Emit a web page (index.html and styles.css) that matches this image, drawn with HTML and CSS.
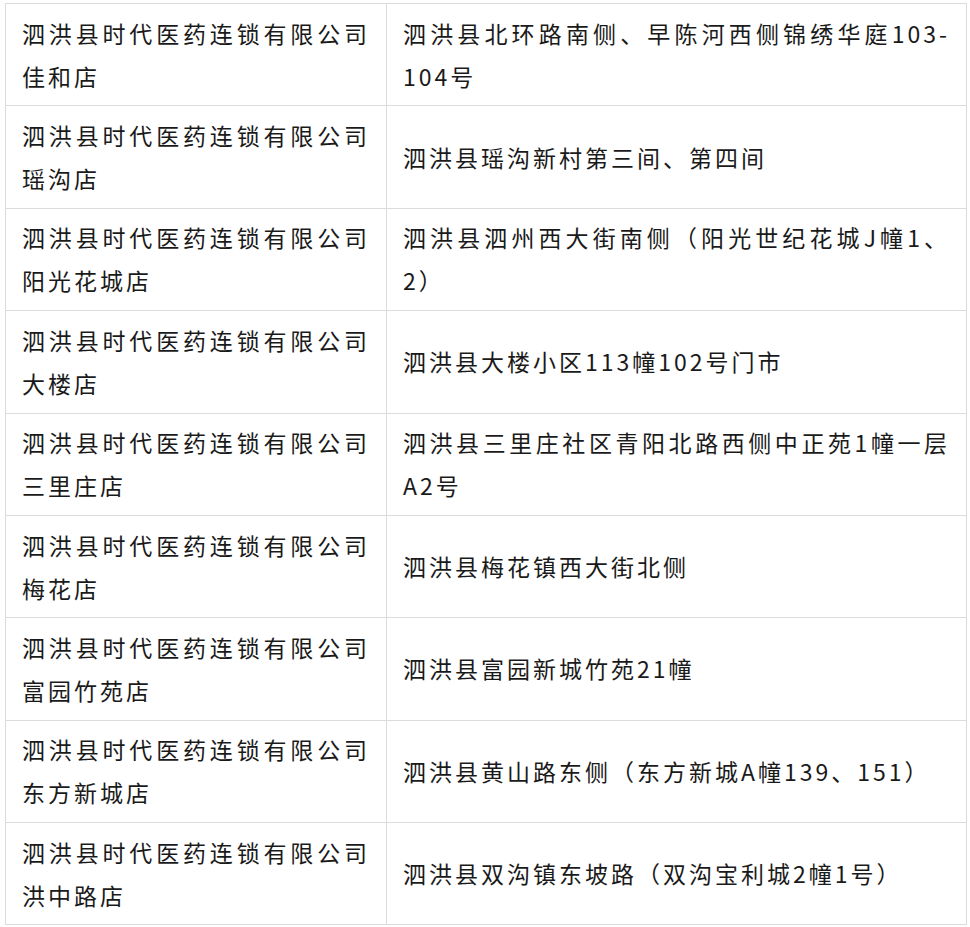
FILE: index.html
```html
<!DOCTYPE html>
<html lang="zh-CN">
<head>
<meta charset="utf-8">
<title>门店列表</title>
<link rel="stylesheet" href="styles.css">
</head>
<body>
<table class="stores">
  <colgroup><col class="col-name"><col class="col-addr"></colgroup>
  <tbody>
    <tr><td>泗洪县时代医药连锁有限公司佳和店</td><td>泗洪县北环路南侧、早陈河西侧锦绣华庭103-104号</td></tr>
    <tr><td>泗洪县时代医药连锁有限公司瑶沟店</td><td>泗洪县瑶沟新村第三间、第四间</td></tr>
    <tr><td>泗洪县时代医药连锁有限公司阳光花城店</td><td>泗洪县泗州西大街南侧（阳光世纪花城J幢1、2）</td></tr>
    <tr><td>泗洪县时代医药连锁有限公司大楼店</td><td>泗洪县大楼小区113幢102号门市</td></tr>
    <tr><td>泗洪县时代医药连锁有限公司三里庄店</td><td>泗洪县三里庄社区青阳北路西侧中正苑1幢一层A2号</td></tr>
    <tr><td>泗洪县时代医药连锁有限公司梅花店</td><td>泗洪县梅花镇西大街北侧</td></tr>
    <tr><td>泗洪县时代医药连锁有限公司富园竹苑店</td><td>泗洪县富园新城竹苑21幢</td></tr>
    <tr><td>泗洪县时代医药连锁有限公司东方新城店</td><td>泗洪县黄山路东侧（东方新城A幢139、151）</td></tr>
    <tr><td>泗洪县时代医药连锁有限公司洪中路店</td><td>泗洪县双沟镇东坡路（双沟宝利城2幢1号）</td></tr>
  </tbody>
</table>
</body>
</html>
```
FILE: styles.css
```css
html, body {
  margin: 0;
  padding: 0;
  background: #ffffff;
}

body {
  padding: 3px 3px 0 5px;
  font-family: "Noto Sans CJK SC", "Noto Sans", sans-serif;
  color: #1a1a1a;
}

.stores {
  border-collapse: collapse;
  table-layout: fixed;
  width: 962px;
}

.col-name {
  width: 381px;
}

.stores td {
  border: 1px solid #dcdcdc;
  padding: 7.7px 16px;
  font-size: 23px;
  line-height: 43px;
  letter-spacing: 3px;
  text-align: justify;
  vertical-align: middle;
  word-break: normal;
}
```
